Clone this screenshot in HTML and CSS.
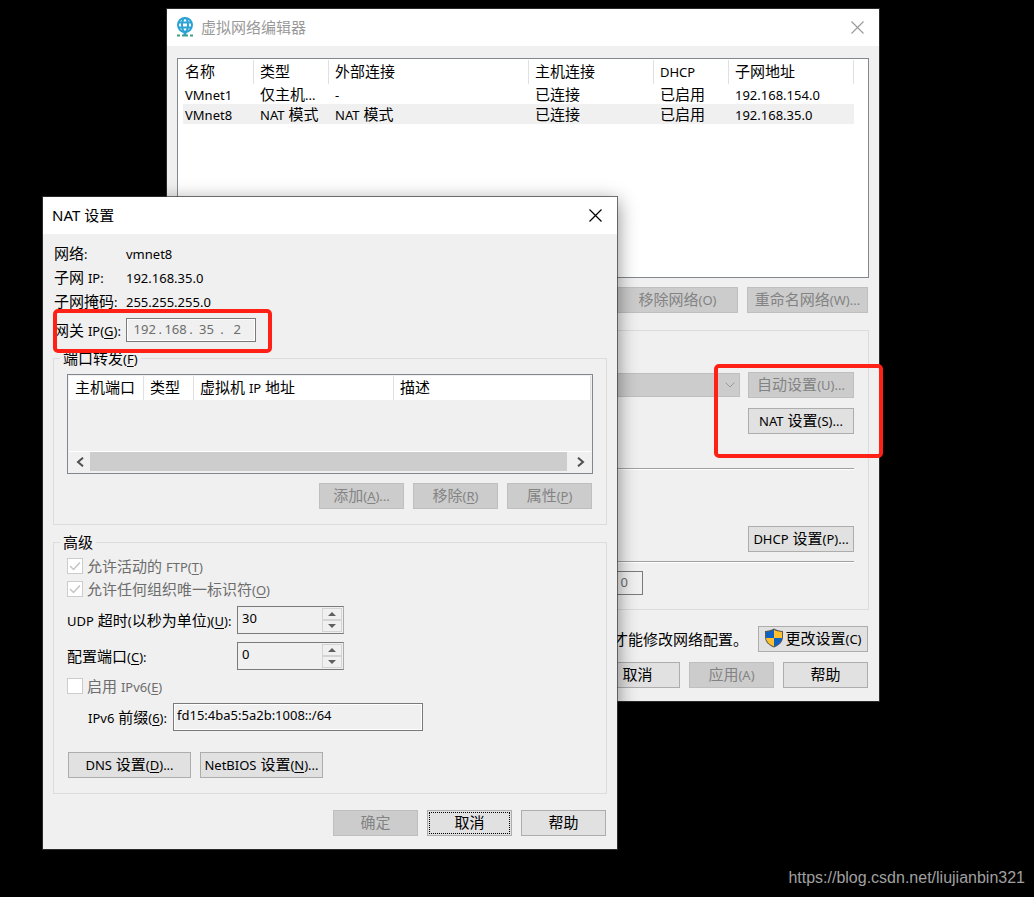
FILE: index.html
```html
<!DOCTYPE html>
<html lang="zh-CN">

<head>
    <meta charset="UTF-8">
    <meta name="viewport" content="width=device-width, initial-scale=1.0">
    <title>虚拟网络编辑器</title>
    <link rel="stylesheet" href="styles.css">
</head>

<body>
    <div class="window editor">
        <div class="titlebar inactive">
            <svg class="app-icon" width="18" height="20" viewBox="0 0 18 20" fill="none">
                <circle cx="9" cy="8" r="7" stroke="#2ba3d4" stroke-width="2" />
                <ellipse cx="9" cy="8" rx="3" ry="7" stroke="#2ba3d4" stroke-width="2" />
                <path d="M2 5.500h14M2 10.500h14" stroke="#2ba3d4" stroke-width="2" />
                <path d="M9 15v3" stroke="#2ba3d4" stroke-width="3" />
                <path d="M1 18.500h3M6 18.500h6M14 18.500h3" stroke="#3f9f8c" stroke-width="2" />
            </svg>
            <h1>虚拟网络编辑器</h1>
            <button class="close" aria-label="关闭">
                <svg width="13" height="13" viewBox="0 0 13 13" stroke="currentColor" stroke-width="1.1">
                    <path d="M.5.5l12 12M12.5.5l-12 12" />
                </svg>
            </button>
        </div>
        <div class="editor-body">
            <div class="listbox networks">
                <table>
                    <colgroup>
                        <col class="c-name">
                        <col class="c-type">
                        <col class="c-external">
                        <col class="c-host">
                        <col class="c-dhcp">
                        <col class="c-subnet">
                    </colgroup>
                    <thead>
                        <tr>
                            <th>名称</th>
                            <th>类型</th>
                            <th>外部连接</th>
                            <th>主机连接</th>
                            <th><span class="en">DHCP</span></th>
                            <th>子网地址</th>
                        </tr>
                    </thead>
                    <tbody>
                        <tr>
                            <td><span class="en">VMnet1</span></td>
                            <td>仅主机<span class="en">...</span></td>
                            <td><span class="en">-</span></td>
                            <td>已连接</td>
                            <td>已启用</td>
                            <td><span class="en">192.168.154.0</span></td>
                        </tr>
                        <tr class="selected">
                            <td><span class="en">VMnet8</span></td>
                            <td><span class="en">NAT</span> 模式</td>
                            <td><span class="en">NAT</span> 模式</td>
                            <td>已连接</td>
                            <td>已启用</td>
                            <td><span class="en">192.168.35.0</span></td>
                        </tr>
                    </tbody>
                </table>
            </div>
            <div class="buttons">
                <button class="btn btn-wide" disabled>移除网络<span class="en">(O)</span></button>
                <button class="btn btn-wide" disabled>重命名网络<span class="en">(W)...</span></button>
            </div>
            <fieldset class="group vmnet-info">
                <div class="bridge-row">
                    <select disabled aria-label="桥接到">
                        <option></option>
                    </select>
                    <button class="btn btn-side" disabled>自动设置<span class="en">(U)...</span></button>
                </div>
                <div class="side-row">
                    <button class="btn btn-side"><span class="en">NAT</span> 设置<span class="en">(S)...</span></button>
                </div>
                <hr>
                <div class="side-row dhcp-row">
                    <button class="btn btn-side"><span class="en">DHCP</span> 设置<span class="en">(P)...</span></button>
                </div>
                <hr>
                <input class="mask" type="text" value="0" disabled aria-label="子网掩码">
            </fieldset>
            <div class="admin-row">
                <span>才能修改网络配置。</span>
                <button class="btn btn-admin">
                    <svg width="20" height="20" viewBox="0 0 20 20">
                        <path d="M10 .5C7.500 2 4 3 1 3v6c0 5 4 8.500 9 10.500 5-2 9-5.500 9-10.500V3c-3 0-6.500-1-9-2.500z" fill="#5b5b5b" />
                        <path d="M10 1.800V10H2V4c3 0 6-.9 8-2.200z" fill="#0f62c4" />
                        <path d="M10 1.800V10h8V4c-3 0-6-.9-8-2.200z" fill="#ffc02e" />
                        <path d="M10 10H2c.5 4 4 7 8 8.400z" fill="#ffc02e" />
                        <path d="M10 10h8c-.5 4-4 7-8 8.400z" fill="#0f62c4" />
                    </svg>
                    <span>更改设置<span class="en">(C)</span></span>
                </button>
            </div>
            <div class="buttons">
                <button class="btn">取消</button>
                <button class="btn" disabled>应用<span class="en">(A)</span></button>
                <button class="btn">帮助</button>
            </div>
        </div>
        <div class="marker marker-nat"></div>
    </div>

    <div class="window nat">
        <div class="titlebar">
            <h1>NAT 设置</h1>
            <button class="close" aria-label="关闭">
                <svg width="13" height="13" viewBox="0 0 13 13" stroke="currentColor" stroke-width="1.2">
                    <path d="M.5.5l12 12M12.5.5l-12 12" />
                </svg>
            </button>
        </div>
        <div class="nat-body">
            <dl class="info">
                <dt>网络<span class="en">:</span></dt>
                <dd><span class="en">vmnet8</span></dd>
                <dt>子网 <span class="en">IP:</span></dt>
                <dd><span class="en">192.168.35.0</span></dd>
                <dt>子网掩码<span class="en">:</span></dt>
                <dd><span class="en">255.255.255.0</span></dd>
            </dl>
            <div class="gateway">
                <label for="ip1">网关 <span class="en">IP(<u>G</u>):</span></label>
                <div class="ip-box">
                    <input id="ip1" type="text" value="192" disabled>
                    <span>.</span>
                    <input type="text" value="168" disabled aria-label="IP 2">
                    <span>.</span>
                    <input type="text" value="35" disabled aria-label="IP 3">
                    <span>.</span>
                    <input type="text" value="2" disabled aria-label="IP 4">
                </div>
            </div>

            <fieldset class="group">
                <legend>端口转发<span class="en">(<u>F</u>)</span></legend>
                <div class="group-body forwarding">
                    <div class="listbox ports">
                        <table>
                            <colgroup>
                                <col class="c-port">
                                <col class="c-kind">
                                <col class="c-vm">
                                <col>
                            </colgroup>
                            <thead>
                                <tr>
                                    <th>主机端口</th>
                                    <th>类型</th>
                                    <th>虚拟机 <span class="en">IP</span> 地址</th>
                                    <th>描述</th>
                                </tr>
                            </thead>
                        </table>
                        <div class="scrollbar">
                            <button aria-label="向左">
                                <svg width="8" height="10" viewBox="0 0 8 10" fill="none" stroke="#505050" stroke-width="2">
                                    <path d="M7 .7L2 5l5 4.300" />
                                </svg>
                            </button>
                            <div class="thumb"></div>
                            <button aria-label="向右">
                                <svg width="8" height="10" viewBox="0 0 8 10" fill="none" stroke="#505050" stroke-width="2">
                                    <path d="M1 .7L6 5 1 9.300" />
                                </svg>
                            </button>
                        </div>
                    </div>
                    <div class="buttons">
                        <button class="btn" disabled>添加<span class="en">(<u>A</u>)...</span></button>
                        <button class="btn" disabled>移除<span class="en">(<u>R</u>)</span></button>
                        <button class="btn" disabled>属性<span class="en">(<u>P</u>)</span></button>
                    </div>
                </div>
            </fieldset>

            <fieldset class="group advanced">
                <legend>高级</legend>
                <div class="group-body">
                    <label class="check"><input type="checkbox" checked disabled><span>允许活动的 <span class="en">FTP(<u>T</u>)</span></span></label>
                    <label class="check"><input type="checkbox" checked disabled><span>允许任何组织唯一标识符<span class="en">(<u>O</u>)</span></span></label>
                    <div class="spin-row">
                        <label for="udp"><span class="en">UDP</span> 超时<span class="en">(</span>以秒为单位<span class="en">)(<u>U</u>):</span></label>
                        <div class="spin">
                            <input id="udp" type="text" value="30">
                            <div class="arrows">
                                <button aria-label="增加"><i class="up"></i></button>
                                <button aria-label="减少"><i class="down"></i></button>
                            </div>
                        </div>
                    </div>
                    <div class="spin-row">
                        <label for="port">配置端口<span class="en">(<u>C</u>):</span></label>
                        <div class="spin">
                            <input id="port" type="text" value="0">
                            <div class="arrows">
                                <button aria-label="增加"><i class="up"></i></button>
                                <button aria-label="减少"><i class="down"></i></button>
                            </div>
                        </div>
                    </div>
                    <label class="check ipv6"><input type="checkbox" disabled><span>启用 <span class="en">IPv6(<u>E</u>)</span></span></label>
                    <div class="prefix-row">
                        <label for="prefix"><span class="en">IPv6</span> 前缀<span class="en">(<u>6</u>):</span></label>
                        <input id="prefix" type="text" value="fd15:4ba5:5a2b:1008::/64">
                    </div>
                    <div class="link-row">
                        <button class="btn btn-wide"><span class="en">DNS</span> 设置<span class="en">(<u>D</u>)...</span></button>
                        <button class="btn btn-wide"><span class="en">NetBIOS</span> 设置<span class="en">(<u>N</u>)...</span></button>
                    </div>
                </div>
            </fieldset>

            <div class="buttons">
                <button class="btn" disabled>确定</button>
                <button class="btn focused">取消</button>
                <button class="btn">帮助</button>
            </div>
        </div>
        <div class="marker marker-gateway"></div>
    </div>

    <div class="watermark">https://blog.csdn.net/liujianbin321</div>
</body>

</html>
```
FILE: styles.css
```css
* {
    box-sizing: border-box;
}

body {
    margin: 0;
    min-height: 100vh;
    position: relative;
    overflow: hidden;
    background: #000;
    color: #000;
    font-family: "Noto Sans", "Noto Sans CJK SC", sans-serif;
    font-size: 15px;
    line-height: 20px;
}

button,
input,
select {
    font: inherit;
    color: inherit;
    margin: 0;
}

.en {
    font-size: 13px;
    line-height: 16px;
}

u {
    text-underline-offset: 2px;
}

/* windows */
.window {
    position: absolute;
    background: #f0f0f0;
    background-clip: padding-box;
    border: 1px solid rgba(60, 60, 60, 0.7);
}

.editor {
    top: 8px;
    left: 166px;
    right: 154px;
}

.nat {
    top: 196px;
    left: 42px;
    right: 416px;
    box-shadow: 0 5px 18px rgba(0, 0, 0, 0.45);
}

.titlebar {
    display: flex;
    align-items: center;
    height: 37px;
    padding: 0 10px 2px 9px;
    background: #fff;
}

.titlebar h1 {
    flex: 1;
    margin: 0;
    font-size: 15px;
    font-weight: 400;
}

.inactive {
    color: #999;
}

.app-icon {
    margin-right: 7px;
}

.close {
    display: flex;
    padding: 5px 5px 3px;
    border: none;
    background: none;
}

/* buttons */
.buttons {
    display: flex;
    justify-content: flex-end;
    gap: 9px;
    padding-right: 1px;
}

.btn {
    width: 85px;
    height: 26px;
    padding: 0 0 2px;
    border: 1px solid #adadad;
    background: #e1e1e1;
    line-height: 20px;
    white-space: nowrap;
}

.btn:disabled {
    background: #ccc;
    border-color: #bfbfbf;
    color: #838383;
}

.btn-wide {
    width: 121px;
}

.btn-side {
    width: 106px;
}

.btn-admin {
    display: flex;
    align-items: center;
    justify-content: center;
    gap: 1px;
    width: 110px;
}

.focused {
    outline: 1px dotted #000;
    outline-offset: -3px;
}

/* lists */
.listbox {
    border: 1px solid #828790;
}

.listbox table {
    table-layout: fixed;
    border-collapse: separate;
    border-spacing: 0;
}

.listbox th,
.listbox td {
    padding: 0 0 0 6px;
    font-weight: 400;
    line-height: 18px;
    text-align: left;
    white-space: nowrap;
    overflow: hidden;
}

.listbox th {
    height: 24px;
    padding-bottom: 2px;
    background: #fff;
    border-right: 1px solid #e0e0e0;
}

.networks {
    min-height: 220px;
    padding: 1px 0 0 5px;
    background: #fff;
}

.networks table {
    width: 671px;
}

.networks th:first-child,
.networks td:first-child {
    padding-left: 2px;
}

.networks td {
    height: 20px;
    padding-bottom: 1px;
}

.c-name {
    width: 71px;
}

.c-type,
.c-dhcp {
    width: 75px;
}

.c-external {
    width: 200px;
}

.c-host,
.c-subnet {
    width: 125px;
}

.selected td {
    background: #f0f0f0;
}

.ports {
    display: flex;
    flex-direction: column;
    justify-content: space-between;
    height: 100px;
    padding: 1px;
}

.ports table {
    width: 100%;
}

.c-port {
    width: 75px;
}

.c-kind {
    width: 50px;
}

.c-vm {
    width: 200px;
}

.scrollbar {
    display: flex;
    height: 21px;
    padding-bottom: 1px;
    border-top: 1px solid #fff;
}

.scrollbar button {
    display: flex;
    align-items: center;
    justify-content: center;
    width: 21px;
    padding: 0;
    border: none;
    background: none;
}

.thumb {
    flex: 1;
    margin-right: 3px;
    background: #cdcdcd;
}

/* group boxes */
.group {
    margin: 0;
    padding: 0;
    min-width: 0;
    border: 1px solid #dcdcdc;
}

.group legend {
    margin-left: 6px;
    padding: 0 3px;
}

.group-body {
    padding: 4px 13px 15px;
}

/* editor window */
.editor-body {
    padding: 12px 10px 13px;
}

.networks + .buttons {
    margin: 9px 0 17px;
}

.vmnet-info {
    padding: 41px 14px 14px;
}

.bridge-row {
    display: flex;
    justify-content: flex-end;
    align-items: center;
    gap: 8px;
}

.bridge-row select {
    width: 310px;
    height: 24px;
    appearance: none;
    border: 1px solid #bfbfbf;
    border-radius: 0;
    opacity: 1;
    background: #ccc url("data:image/svg+xml,%3Csvg xmlns='http://www.w3.org/2000/svg' width='10' height='6' fill='none' stroke='%23999'%3E%3Cpath d='M.5.5L5 5 9.500.5'/%3E%3C/svg%3E") no-repeat right 4px center;
}

.side-row {
    display: flex;
    justify-content: flex-end;
    margin-top: 10px;
}

.vmnet-info hr {
    height: 2px;
    margin: 34px 0 0;
    border: none;
    border-top: 1px solid #a0a0a0;
    background: #fff;
}

.vmnet-info .dhcp-row {
    margin-top: 56px;
}

.vmnet-info .dhcp-row + hr {
    margin-top: 9px;
}

.mask {
    display: block;
    width: 130px;
    height: 24px;
    margin: 8px 0 0 321px;
    padding: 0 14px 2px 0;
    border: 1px solid #7a7a7a;
    background: #f0f0f0;
    color: #6d6d6d;
    font-size: 13px;
    text-align: right;
}

.admin-row {
    display: flex;
    justify-content: flex-end;
    align-items: center;
    gap: 10px;
    margin: 16px 0 10px;
    padding-right: 1px;
}

/* nat window */
.nat-body {
    padding: 7px 10px 13px;
}

.info {
    display: grid;
    grid-template-columns: 72px 1fr;
    grid-auto-rows: 24px;
    margin: 0 1px 5px;
    line-height: 24px;
}

.info dd {
    margin: 0;
}

.gateway {
    display: grid;
    grid-template-columns: 72px 130px;
    align-items: center;
    margin: 0 1px 6px;
    white-space: nowrap;
}

.ip-box {
    display: flex;
    align-items: center;
    height: 24px;
    padding: 0 4px 2px;
    border: 1px solid #7a7a7a;
    box-shadow: inset 0 0 0 1px #fff;
    color: #6d6d6d;
    font-size: 13px;
}

.ip-box input {
    flex: 1;
    width: 0;
    padding: 0;
    border: none;
    background: none;
    text-align: center;
}

.advanced {
    margin: 7px 0 16px;
}

.forwarding {
    padding-top: 6px;
}

.ports + .buttons {
    margin-top: 9px;
}

.check {
    display: flex;
    align-items: center;
    gap: 4px;
    height: 20px;
    margin-bottom: 3px;
    color: #6d6d6d;
}

.check input {
    appearance: none;
    width: 16px;
    height: 16px;
    border: 1px solid #ccc;
    background: #fff;
}

.check input:checked {
    background: #fff url("data:image/svg+xml,%3Csvg xmlns='http://www.w3.org/2000/svg' width='14' height='14' fill='none' stroke='%23c4c4c4' stroke-width='1.500'%3E%3Cpath d='M2 7l3.500 3.500L12 3.500'/%3E%3C/svg%3E") center no-repeat;
}

.spin-row {
    display: grid;
    grid-template-columns: 170px 107px;
    align-items: center;
    margin: 7px 0 8px;
    white-space: nowrap;
}

.spin-row + .spin-row {
    margin: 0 0 6px;
}

.spin {
    display: flex;
    height: 28px;
    padding: 1px;
    border: 1px solid #7a7a7a;
    border-right-color: #adadad;
}

.spin input,
.prefix-row input {
    min-width: 0;
    padding: 0 3px 4px;
    background: none;
    font-size: 13px;
}

.spin input {
    flex: 1;
    border: none;
}

.arrows {
    display: flex;
    flex-direction: column;
    width: 20px;
}

.arrows button {
    display: flex;
    flex: 1;
    align-items: center;
    justify-content: center;
    padding: 0;
    border: 1px solid #d4d4d4;
    background: #f0f0f0;
}

.arrows i {
    border: 4px solid transparent;
}

.arrows .up {
    border-top: none;
    border-bottom-color: #606060;
}

.arrows .down {
    border-bottom: none;
    border-top-color: #606060;
}

.prefix-row {
    display: flex;
    align-items: center;
    margin-top: 7px;
    padding-left: 21px;
    white-space: nowrap;
}

.prefix-row label {
    width: 85px;
}

.prefix-row input {
    width: 250px;
    height: 28px;
    border: 1px solid #7a7a7a;
    box-shadow: inset 0 0 0 1px #fff;
}

.link-row {
    display: flex;
    gap: 9px;
    margin-top: 21px;
    padding-left: 1px;
}

.link-row .btn {
    width: 123px;
}

/* red highlight boxes */
.marker {
    position: absolute;
    border: 4px solid #ff2116;
    border-radius: 5px;
    pointer-events: none;
}

.marker-nat {
    top: 355px;
    right: -4px;
    width: 169px;
    height: 94px;
}

.marker-gateway {
    top: 112px;
    left: 10px;
    width: 219px;
    height: 44px;
}

.watermark {
    position: absolute;
    right: 9px;
    bottom: 9px;
    color: #a0a0a0;
    font-family: "Liberation Sans", sans-serif;
    font-size: 16px;
}
```
